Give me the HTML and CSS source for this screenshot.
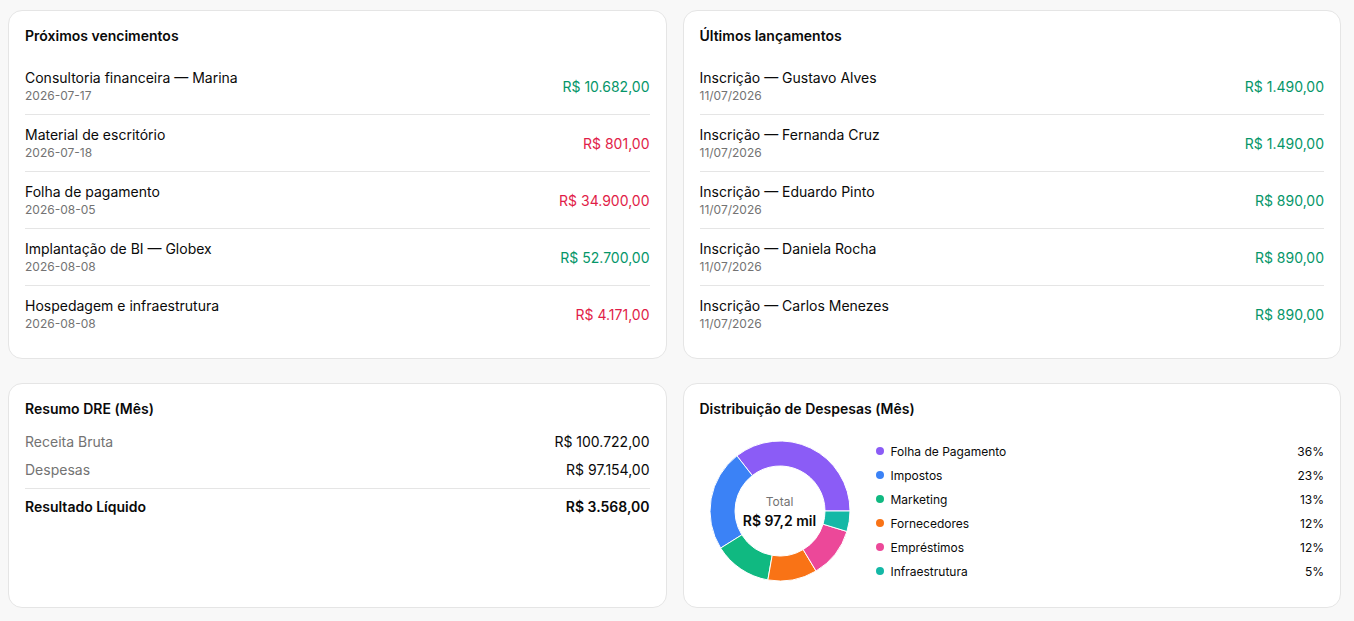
FILE: index.html
```html
<!DOCTYPE html>
<html lang="pt-BR">
<head>
  <meta charset="UTF-8" />
  <meta name="viewport" content="width=device-width, initial-scale=1.0"/>
  <title>Painel financeiro</title>
  <link rel="stylesheet" href="styles.css">
</head>
<body>
  <div class="dashboard">

    <div class="card">
      <h3 class="card-title">Próximos vencimentos</h3>
      <ul class="list">
        <li class="list-item">
          <div class="item-info">
            <span class="item-name">Consultoria financeira — Marina</span>
            <span class="item-date">2026-07-17</span>
          </div>
          <span class="amount in">R$ 10.682,00</span>
        </li>
        <li class="list-item">
          <div class="item-info">
            <span class="item-name">Material de escritório</span>
            <span class="item-date">2026-07-18</span>
          </div>
          <span class="amount out">R$ 801,00</span>
        </li>
        <li class="list-item">
          <div class="item-info">
            <span class="item-name">Folha de pagamento</span>
            <span class="item-date">2026-08-05</span>
          </div>
          <span class="amount out">R$ 34.900,00</span>
        </li>
        <li class="list-item">
          <div class="item-info">
            <span class="item-name">Implantação de BI — Globex</span>
            <span class="item-date">2026-08-08</span>
          </div>
          <span class="amount in">R$ 52.700,00</span>
        </li>
        <li class="list-item">
          <div class="item-info">
            <span class="item-name">Hospedagem e infraestrutura</span>
            <span class="item-date">2026-08-08</span>
          </div>
          <span class="amount out">R$ 4.171,00</span>
        </li>
      </ul>
    </div>

    <div class="card">
      <h3 class="card-title">Últimos lançamentos</h3>
      <ul class="list">
        <li class="list-item">
          <div class="item-info">
            <span class="item-name">Inscrição — Gustavo Alves</span>
            <span class="item-date">11/07/2026</span>
          </div>
          <span class="amount in">R$ 1.490,00</span>
        </li>
        <li class="list-item">
          <div class="item-info">
            <span class="item-name">Inscrição — Fernanda Cruz</span>
            <span class="item-date">11/07/2026</span>
          </div>
          <span class="amount in">R$ 1.490,00</span>
        </li>
        <li class="list-item">
          <div class="item-info">
            <span class="item-name">Inscrição — Eduardo Pinto</span>
            <span class="item-date">11/07/2026</span>
          </div>
          <span class="amount in">R$ 890,00</span>
        </li>
        <li class="list-item">
          <div class="item-info">
            <span class="item-name">Inscrição — Daniela Rocha</span>
            <span class="item-date">11/07/2026</span>
          </div>
          <span class="amount in">R$ 890,00</span>
        </li>
        <li class="list-item">
          <div class="item-info">
            <span class="item-name">Inscrição — Carlos Menezes</span>
            <span class="item-date">11/07/2026</span>
          </div>
          <span class="amount in">R$ 890,00</span>
        </li>
      </ul>
    </div>

    <div class="card">
      <h3 class="card-title">Resumo DRE (Mês)</h3>
      <div class="dre">
        <div class="dre-row">
          <span class="dre-label">Receita Bruta</span>
          <span>R$ 100.722,00</span>
        </div>
        <div class="dre-row">
          <span class="dre-label">Despesas</span>
          <span>R$ 97.154,00</span>
        </div>
        <div class="dre-row total">
          <span>Resultado Líquido</span>
          <span>R$ 3.568,00</span>
        </div>
      </div>
    </div>

    <div class="card">
      <h3 class="card-title">Distribuição de Despesas (Mês)</h3>
      <div class="chart">
        <div class="donut">
          <!-- fatias no sentido anti-horário a partir das 3h -->
          <svg viewBox="-80 -80 160 160" width="160" height="160">
            <g stroke="#fff" stroke-width="1">
              <path fill="#8b5cf6" d="M70,0 A70,70 0 0 0 -43.10,-55.16 L-27.71,-35.46 A45,45 0 0 1 45,0 Z"/>
              <path fill="#3b82f6" d="M-43.10,-55.16 A70,70 0 0 0 -59.36,37.09 L-38.16,23.85 A45,45 0 0 1 -27.71,-35.46 Z"/>
              <path fill="#10b981" d="M-59.36,37.09 A70,70 0 0 0 -12.15,68.94 L-7.81,44.32 A45,45 0 0 1 -38.16,23.85 Z"/>
              <path fill="#f97316" d="M-12.15,68.94 A70,70 0 0 0 36.05,60.00 L23.18,38.57 A45,45 0 0 1 -7.81,44.32 Z"/>
              <path fill="#ec4899" d="M36.05,60.00 A70,70 0 0 0 66.94,20.47 L43.03,13.16 A45,45 0 0 1 23.18,38.57 Z"/>
              <path fill="#14b8a6" d="M66.94,20.47 A70,70 0 0 0 70,0 L45,0 A45,45 0 0 1 43.03,13.16 Z"/>
            </g>
          </svg>
          <div class="donut-center">
            <span class="donut-label">Total</span>
            <span class="donut-value">R$ 97,2 mil</span>
          </div>
        </div>
        <ul class="legend">
          <li><span class="dot purple"></span><span class="legend-name">Folha de Pagamento</span><span>36%</span></li>
          <li><span class="dot blue"></span><span class="legend-name">Impostos</span><span>23%</span></li>
          <li><span class="dot green"></span><span class="legend-name">Marketing</span><span>13%</span></li>
          <li><span class="dot orange"></span><span class="legend-name">Fornecedores</span><span>12%</span></li>
          <li><span class="dot pink"></span><span class="legend-name">Empréstimos</span><span>12%</span></li>
          <li><span class="dot teal"></span><span class="legend-name">Infraestrutura</span><span>5%</span></li>
        </ul>
      </div>
    </div>

  </div>
</body>
</html>
```

FILE: styles.css
```css
* {
  box-sizing: border-box;
}
body {
  margin: 0;
  font-family: Inter, "Noto Sans", sans-serif;
  background-color: #f8f8f8;
  color: #0a0a0a;
}
.dashboard {
  display: grid;
  grid-template-columns: 1fr 1fr;
  column-gap: 16px;
  row-gap: 24px;
  padding: 10px 13px 0 8px;
}
.card {
  background-color: white;
  border: 1px solid #e5e5e5;
  border-radius: 14px;
  padding: 16px;
}
.card-title {
  margin: 0 0 13px;
  font-size: 14px;
  line-height: 18px;
  font-weight: 600;
}

/* listas de vencimentos e lançamentos */
.list {
  list-style: none;
  margin: 0;
  padding: 0;
}
.list-item {
  display: flex;
  align-items: center;
  justify-content: space-between;
  padding: 10px 0;
  border-bottom: 1px solid #e5e5e5;
}
.list-item:last-child {
  border-bottom: none;
}
.item-info {
  display: flex;
  flex-direction: column;
}
.item-name {
  font-size: 14px;
  line-height: 20px;
}
.item-date {
  font-size: 12px;
  line-height: 16px;
  color: #737373;
}
.amount {
  font-size: 14px;
}
.amount.in {
  color: #059669;
}
.amount.out {
  color: #e11d48;
}

/* DRE */
.dre {
  margin-top: -3px;
}
.dre-row {
  display: flex;
  justify-content: space-between;
  font-size: 14px;
  line-height: 20px;
  padding: 4px 0;
}
.dre-label {
  color: #737373;
}
.dre-row.total {
  font-weight: 600;
  margin-top: 4px;
  padding-top: 8px;
  border-top: 1px solid #e5e5e5;
}

/* gráfico de rosca */
.chart {
  display: flex;
  align-items: center;
  gap: 16px;
}
.donut {
  position: relative;
  width: 160px;
  height: 160px;
  flex-shrink: 0;
}
.donut svg {
  display: block;
}
.donut-center {
  position: absolute;
  inset: 0;
  display: flex;
  flex-direction: column;
  align-items: center;
  justify-content: center;
  padding-top: 2px;
}
.donut-label {
  font-size: 12px;
  color: #737373;
  line-height: 18px;
}
.donut-value {
  font-size: 14px;
  font-weight: 600;
  line-height: 20px;
}
.legend {
  flex: 1;
  list-style: none;
  margin: 0;
  padding: 0;
  font-size: 12px;
}
.legend li {
  display: flex;
  align-items: center;
  height: 24px;
}
.legend-name {
  flex: 1;
  margin-left: 7px;
}
.dot {
  width: 8px;
  height: 8px;
  border-radius: 50%;
}
.purple { background-color: #8b5cf6; }
.blue { background-color: #3b82f6; }
.green { background-color: #10b981; }
.orange { background-color: #f97316; }
.pink { background-color: #ec4899; }
.teal { background-color: #14b8a6; }
```
